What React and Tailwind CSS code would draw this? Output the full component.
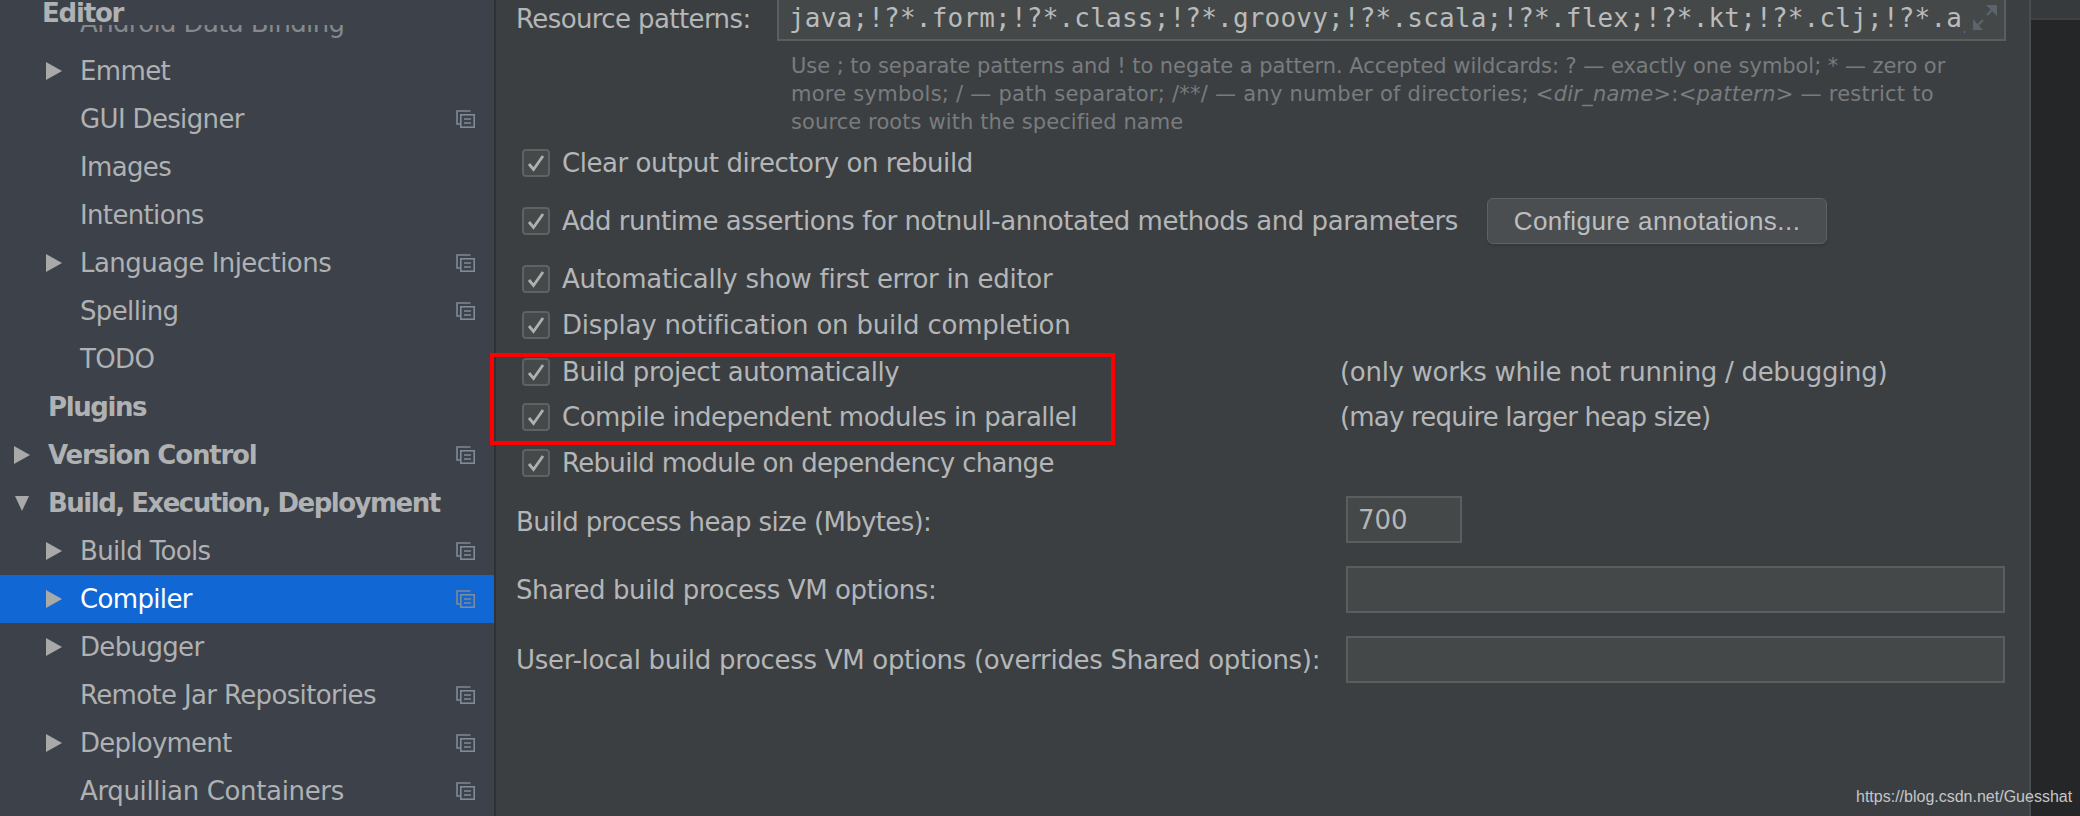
import React from 'react';

const sidebarRows = [
  { label: 'Android Data Binding', indent: true, dim: true },
  { label: 'Emmet', indent: true, arrow: 'right' },
  { label: 'GUI Designer', indent: true, copy: true },
  { label: 'Images', indent: true },
  { label: 'Intentions', indent: true },
  { label: 'Language Injections', indent: true, arrow: 'right', copy: true, track: 'tracking-[-0.55px]' },
  { label: 'Spelling', indent: true, copy: true },
  { label: 'TODO', indent: true },
  { label: 'Plugins', bold: true },
  { label: 'Version Control', bold: true, arrow: 'right', copy: true, track: 'tracking-[-1.2px]' },
  { label: 'Build, Execution, Deployment', bold: true, arrow: 'down', track: 'tracking-[-1.5px]' },
  { label: 'Build Tools', indent: true, arrow: 'right', copy: true },
  { label: 'Compiler', indent: true, arrow: 'right', copy: true, selected: true },
  { label: 'Debugger', indent: true, arrow: 'right' },
  { label: 'Remote Jar Repositories', indent: true, copy: true },
  { label: 'Deployment', indent: true, arrow: 'right', copy: true, track: 'tracking-[-0.75px]' },
  { label: 'Arquillian Containers', indent: true, copy: true, track: 'tracking-[-0.35px]' },
];

function CopyIcon() {
  return (
    <svg width="19" height="18" viewBox="0 0 19 18" fill="none" stroke="#7f8b97" strokeWidth="1.6" className="absolute right-[19px] top-[15px]">
      <path d="M14.5 1H1v13h3.5" />
      <rect x="4.8" y="4.8" width="13.4" height="12.4" />
      <path d="M8 9h7M8 13h7" />
    </svg>
  );
}

function Arrow({ dir, indent }) {
  const place = indent ? 'left-[46px]' : 'left-[14px]';
  if (dir === 'down') {
    return (
      <svg width="14" height="15" viewBox="0 0 14 15" className="absolute top-[17px] left-[15px]">
        <path d="M0 0h14L7 15z" fill="#a9a9a9" />
      </svg>
    );
  }
  return (
    <svg width="16" height="18" viewBox="0 0 16 18" className={`absolute top-[15px] ${place}`}>
      <path d="M0 0l16 9L0 18z" fill="#a9a9a9" />
    </svg>
  );
}

function SidebarRow({ row }) {
  const color = row.selected ? 'bg-[#1167d3] text-white' : row.dim ? 'text-[#85888c]' : 'text-[#afb1b3]';
  const track = row.track || (row.bold ? 'tracking-[-1.4px]' : 'tracking-[-0.65px]');
  return (
    <div className={`relative h-[48px] flex items-center ${color} ${row.indent ? 'pl-[80px]' : 'pl-[48px]'}`}>
      {row.arrow && <Arrow dir={row.arrow} indent={row.indent} />}
      <span className={`whitespace-nowrap ${track} ${row.bold ? 'font-bold' : ''}`}>{row.label}</span>
      {row.copy && <CopyIcon />}
    </div>
  );
}

function Check({ label, hint, hintTrack, track = 'tracking-[-0.45px]', className }) {
  return (
    <div className={`flex items-center h-[30px] ${className}`}>
      <div className="w-[28px] h-[28px] ml-[26px] shrink-0 rounded-[4px] border-2 border-[#5f6263] bg-[#45494a] flex items-center justify-center">
        <svg width="18" height="18" viewBox="0 0 18 18" fill="none" stroke="#aeb0b1" strokeWidth="2.8">
          <path d="M2 10l4.5 5.5L16 2" />
        </svg>
      </div>
      <span className={`ml-[12px] whitespace-nowrap ${track}`}>{label}</span>
      {hint && <span className={`absolute left-[844px] whitespace-nowrap ${hintTrack}`}>{hint}</span>}
    </div>
  );
}

function Field({ label, labelClass, className, value, width }) {
  return (
    <div className={`flex items-center h-[47px] ${className}`}>
      <span className={`w-[850px] pl-[20px] shrink-0 whitespace-nowrap ${labelClass}`}>{label}</span>
      <div className={`h-[47px] border-2 border-[#5b5d5e] bg-[#444848] pl-[10px] flex items-center ${width}`}>{value}</div>
    </div>
  );
}

export default function App() {
  return (
    <div className="flex w-[2080px] h-[816px] overflow-hidden bg-[#3c3f41] text-[26px] leading-[30px] font-['DejaVu_Sans',sans-serif]">
      {/* Settings tree */}
      <div className="relative w-[494px] h-full shrink-0 bg-[#3c414a] overflow-hidden">
        <div className="-mt-[1px]">
          {sidebarRows.map((row) => (
            <SidebarRow key={row.label} row={row} />
          ))}
        </div>
        {/* sticky group header */}
        <div className="absolute top-0 left-0 w-full h-[25px] bg-[#3c414a] pl-[42px] font-bold text-[#afb1b3] tracking-[-1.2px] leading-[27px]">Editor</div>
      </div>
      <div className="w-[2px] h-full shrink-0 bg-[#2f3133]" />

      {/* Compiler page */}
      <div className="relative w-[1535px] h-full shrink-0 border-r-2 border-[#4a4d4f] text-[#b4b6b8]">
        <div className="flex h-[41px]">
          <span className="w-[281px] pl-[20px] shrink-0 tracking-[-0.6px] leading-[38px]">Resource patterns:</span>
          <div className="relative w-[1229px] h-[41px] shrink-0 border-2 border-t-0 border-[#5b5d5e] bg-[#444848] pl-[10px] overflow-hidden">
            <div className="w-[1176px] overflow-hidden whitespace-nowrap font-['DejaVu_Sans_Mono',monospace] tracking-[0.2px] leading-[36px] text-[#b9bbbd]">
              java;!?*.form;!?*.class;!?*.groovy;!?*.scala;!?*.flex;!?*.kt;!?*.clj;!?*.aj
            </div>
            <svg width="24" height="25" viewBox="0 0 24 25" className="absolute right-[7px] top-[5px]">
              <path d="M24 0v11L13 0z" fill="#5a646c" />
              <path d="M0 25V14l10 11z" fill="#5a646c" />
              <path d="M19 5l-5 5M5 20l5-5" stroke="#5a646c" strokeWidth="2.4" />
            </svg>
          </div>
        </div>

        <div className="mt-[11px] ml-[295px] w-[1200px] text-[21px] leading-[28px] text-[#797c7e]">
          <div className="whitespace-nowrap tracking-[-0.05px]">Use ; to separate patterns and ! to negate a pattern. Accepted wildcards: ? — exactly one symbol; * — zero or</div>
          <div className="whitespace-nowrap tracking-[0.25px]">more symbols; / — path separator; /**/ — any number of directories; <i>&lt;dir_name&gt;</i>:<i>&lt;pattern&gt;</i> — restrict to</div>
          <div className="whitespace-nowrap tracking-[0.1px]">source roots with the specified name</div>
        </div>

        <Check label="Clear output directory on rebuild" className="mt-[12px]" />
        <div className="flex items-center mt-[28px]">
          <Check label="Add runtime assertions for notnull-annotated methods and parameters" />
          <div className="absolute left-[991px] w-[340px] h-[46px] rounded-[6px] border border-[#5e6263] bg-[#4a4e50] shadow-[0_2px_2px_#353739] flex items-center justify-center font-['Liberation_Sans',sans-serif] tracking-[0.44px] text-[#bcbec0]">
            Configure annotations...
          </div>
        </div>
        <Check label="Automatically show first error in editor" track="tracking-[-0.28px]" className="mt-[28px]" />
        <Check label="Display notification on build completion" track="tracking-[-0.2px]" className="mt-[16px]" />
        <Check label="Build project automatically" hint="(only works while not running / debugging)" hintTrack="tracking-[-0.3px]" className="mt-[17px]" />
        <Check label="Compile independent modules in parallel" hint="(may require larger heap size)" hintTrack="tracking-[-0.8px]" track="tracking-[-0.52px]" className="mt-[15px]" />
        <Check label="Rebuild module on dependency change" track="tracking-[-0.68px]" className="mt-[16px]" />

        <Field label="Build process heap size (Mbytes):" labelClass="mt-[4px] tracking-[-0.65px]" value="700" width="w-[116px]" className="mt-[18px]" />
        <Field label="Shared build process VM options:" labelClass="tracking-[-0.4px]" width="w-[659px]" className="mt-[23px]" />
        <Field label="User-local build process VM options (overrides Shared options):" labelClass="tracking-[-0.3px]" width="w-[659px]" className="mt-[23px]" />

        {/* annotation drawn on the screenshot */}
        <div className="absolute -left-[6px] top-[353px] w-[625px] h-[92px] border-[4px] border-[#ff0000]" />
      </div>

      {/* Editor behind the dialog */}
      <div className="flex-1 h-full bg-[#252627]">
        <div className="h-[20px] bg-[#373a3d] border-b-2 border-[#3f4142]" />
      </div>

      <div className="absolute left-[1856px] top-[787px] text-[16px] leading-[20px] text-[#c4c6c8] font-['Liberation_Sans',sans-serif] whitespace-nowrap">
        https://blog.csdn.net/Guesshat
      </div>
    </div>
  );
}
